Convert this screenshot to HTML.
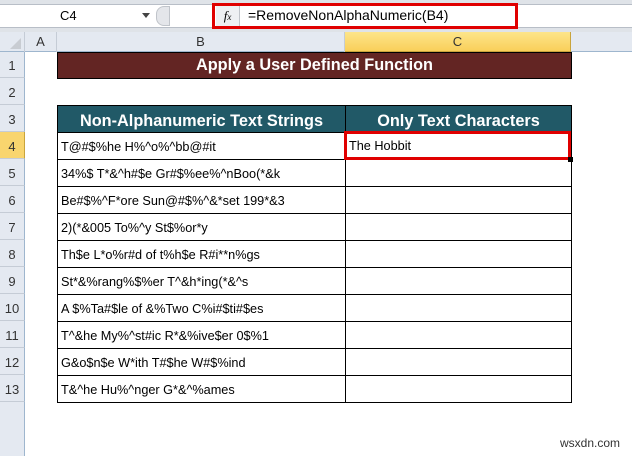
<!DOCTYPE html>
<html><head><style>
*{margin:0;padding:0;box-sizing:border-box}
body{width:632px;height:456px;background:#fff;position:relative;overflow:hidden;font-family:"Liberation Sans",Calibri,sans-serif}
.a{position:absolute}
.rh{position:absolute;left:0;width:25px;background:#e4e9f1;border-bottom:1px solid #c5ccd6;border-right:1px solid #9eb6ce;color:#333;font-size:13px;text-align:center}
.cell{position:absolute;border:1px solid #000;font-size:12.7px;color:#000;padding-left:3px;line-height:28px;white-space:nowrap;overflow:hidden}
</style></head><body>
<div class="a" style="left:0;top:0;width:632px;height:32px;background:#dfe3e8"></div>
<div class="a" style="left:0;top:4px;width:632px;height:24px;background:#fff;border-top:1px solid #b8bec7;border-bottom:1px solid #b8bec7"></div>
<div class="a" style="left:60px;top:8px;font-size:13px">C4</div>
<div class="a" style="left:142px;top:13px;width:0;height:0;border-left:4px solid transparent;border-right:4px solid transparent;border-top:5px solid #444"></div>
<div class="a" style="left:156px;top:6px;width:14px;height:20px;border-radius:8px 0 0 8px;background:#e4e6ea;border:1px solid #c0c4ca"></div>
<div class="a" style="left:212px;top:3px;width:306px;height:26px;border:3px solid #e00000"></div>
<div class="a" style="left:216px;top:6px;width:24px;height:20px;background:#eef0f3;border-right:1px solid #c0c4ca;font-family:'Liberation Serif',serif;font-style:italic;font-size:13px;text-align:center;line-height:20px">f<span style="font-size:9px">x</span></div>
<div class="a" style="left:248px;top:7px;font-size:14px">=RemoveNonAlphaNumeric(B4)</div>
<div class="a" style="left:0;top:32px;width:632px;height:20px;background:#e4e9f1;border-bottom:1px solid #9eb6ce"></div>
<div class="a" style="left:0;top:32px;width:25px;height:20px;border-right:1px solid #c5ccd6"></div>
<div class="a" style="left:10px;top:38px;width:0;height:0;border-left:11px solid transparent;border-bottom:11px solid #c8ccd2"></div>
<div class="a" style="left:25px;top:32px;width:32px;height:20px;border-right:1px solid #c5ccd6;text-align:center;font-size:13px;line-height:20px;color:#333">A</div>
<div class="a" style="left:57px;top:32px;width:288px;height:20px;border-right:1px solid #c5ccd6;text-align:center;font-size:13px;line-height:20px;color:#333">B</div>
<div class="a" style="left:345px;top:32px;width:226px;height:20px;background:linear-gradient(#fde58a,#f9cf5a);border-right:1px solid #c9a43c;border-bottom:1px solid #c9a43c;text-align:center;font-size:13px;line-height:20px;color:#333">C</div>
<div class="a" style="left:0;top:52px;width:25px;height:404px;background:#e4e9f1;border-right:1px solid #9eb6ce"></div>
<div class="rh" style="top:52px;height:26px;line-height:28px">1</div>
<div class="rh" style="top:78px;height:27px;line-height:30px">2</div>
<div class="rh" style="top:105px;height:27px;line-height:30px">3</div>
<div class="rh" style="top:132px;height:27px;line-height:30px;background:#f9d56e;border-right-color:#c9a43c">4</div>
<div class="rh" style="top:159px;height:27px;line-height:30px">5</div>
<div class="rh" style="top:186px;height:27px;line-height:30px">6</div>
<div class="rh" style="top:213px;height:27px;line-height:30px">7</div>
<div class="rh" style="top:240px;height:27px;line-height:30px">8</div>
<div class="rh" style="top:267px;height:27px;line-height:30px">9</div>
<div class="rh" style="top:294px;height:27px;line-height:30px">10</div>
<div class="rh" style="top:321px;height:27px;line-height:30px">11</div>
<div class="rh" style="top:348px;height:27px;line-height:30px">12</div>
<div class="rh" style="top:375px;height:27px;line-height:30px">13</div>
<div class="a" style="left:57px;top:52px;width:515px;height:27px;background:#632523;border:1px solid #000;color:#fff;font-weight:bold;font-size:16.3px;text-align:center;line-height:25px">Apply a User Defined Function</div>
<div class="a" style="left:57px;top:105px;width:289px;height:28px;background:#215967;border:1px solid #000;color:#fff;font-weight:bold;font-size:16.3px;text-align:center;line-height:30px">Non-Alphanumeric Text Strings</div>
<div class="a" style="left:345px;top:105px;width:227px;height:28px;background:#215967;border:1px solid #000;color:#fff;font-weight:bold;font-size:16.3px;text-align:center;line-height:30px">Only Text Characters</div>
<div class="cell" style="left:57px;top:132px;width:289px;height:28px">T@#$%he H%^o%^bb@#it</div>
<div class="cell" style="left:57px;top:159px;width:289px;height:28px">34%$ T*&amp;^h#$e Gr#$%ee%^nBoo(*&amp;k</div>
<div class="cell" style="left:57px;top:186px;width:289px;height:28px">Be#$%^F*ore Sun@#$%^&amp;*set 199*&amp;3</div>
<div class="cell" style="left:57px;top:213px;width:289px;height:28px">2)(*&amp;005 To%^y St$%or*y</div>
<div class="cell" style="left:57px;top:240px;width:289px;height:28px">Th$e L*o%r#d of t%h$e R#i**n%gs</div>
<div class="cell" style="left:57px;top:267px;width:289px;height:28px">St*&amp;%rang%$%er T^&amp;h*ing(*&amp;^s</div>
<div class="cell" style="left:57px;top:294px;width:289px;height:28px">A $%Ta#$le of &amp;%Two C%i#$ti#$es</div>
<div class="cell" style="left:57px;top:321px;width:289px;height:28px">T^&amp;he My%^st#ic R*&amp;%ive$er 0$%1</div>
<div class="cell" style="left:57px;top:348px;width:289px;height:28px">G&amp;o$n$e W*ith T#$he W#$%ind</div>
<div class="cell" style="left:57px;top:375px;width:289px;height:28px">T&amp;^he Hu%^nger G*&amp;^%ames</div>
<div class="cell" style="left:345px;top:132px;width:227px;height:28px"></div>
<div class="cell" style="left:345px;top:159px;width:227px;height:28px"></div>
<div class="cell" style="left:345px;top:186px;width:227px;height:28px"></div>
<div class="cell" style="left:345px;top:213px;width:227px;height:28px"></div>
<div class="cell" style="left:345px;top:240px;width:227px;height:28px"></div>
<div class="cell" style="left:345px;top:267px;width:227px;height:28px"></div>
<div class="cell" style="left:345px;top:294px;width:227px;height:28px"></div>
<div class="cell" style="left:345px;top:321px;width:227px;height:28px"></div>
<div class="cell" style="left:345px;top:348px;width:227px;height:28px"></div>
<div class="cell" style="left:345px;top:375px;width:227px;height:28px"></div>
<div class="a" style="left:344px;top:131px;width:227px;height:29px;border:3px solid #e00000;font-size:12.7px;padding-left:2px;line-height:25px">The Hobbit</div>
<div class="a" style="left:568px;top:157px;width:5px;height:5px;background:#000"></div>
<div class="a" style="left:560px;top:436px;font-size:12px;color:#333">wsxdn.com</div>
</body></html>
